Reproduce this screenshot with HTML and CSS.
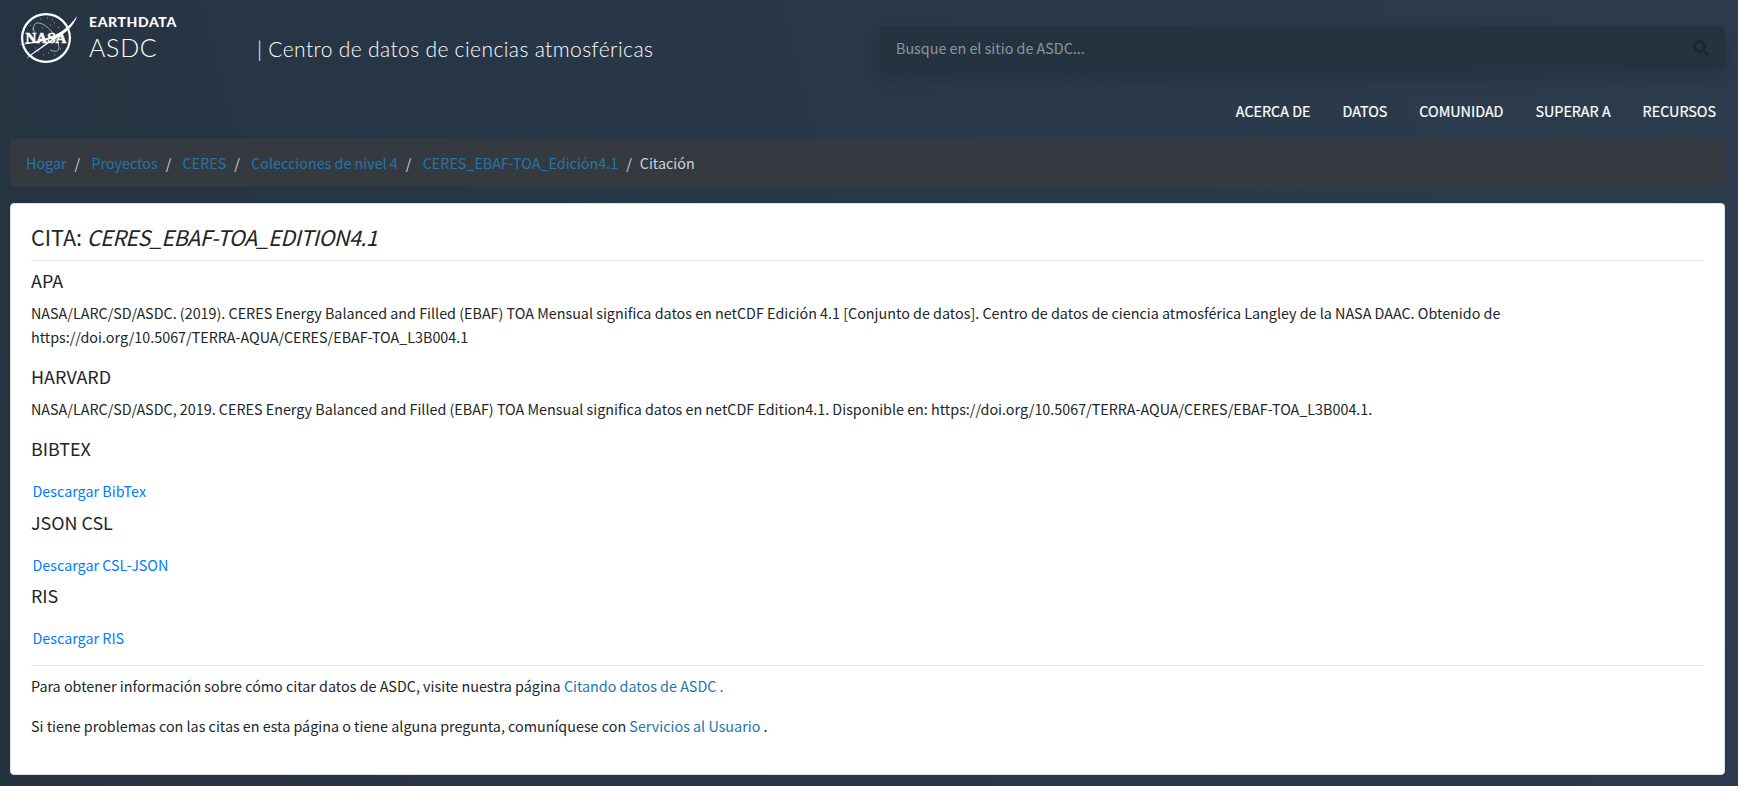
FILE: index.html
```html
<!DOCTYPE html>
<html lang="es">
<head>
<meta charset="utf-8">
<title>ASDC | Citación</title>
<link rel="stylesheet" href="styles.css">
</head>
<body>
<header class="header">
  <div class="brand">
    <svg class="logo" viewBox="0 0 60 54" width="60" height="54">
      <circle cx="28" cy="27" r="23.900" fill="none" stroke="#fff" stroke-width="2.200"/>
      <g fill="none" stroke="#fff">
        <path d="M17 24C14 16 16 11 21 12C30 13 41 28 41 37C40 42 35 40 32 39" stroke-width=".8" opacity=".75"/>
        <path d="M12 14l1 1M22 8h1M34 9h1M40 16l1 1M36 44h1M17 37h1M25 44h1M14 18h1M30 42h1M42 38h1M24 17h1M32 14h1M36 12h1M29 7h1M20 40h1" stroke-width="1" opacity=".55"/>
      </g>
      <path d="M1 34C18 30 34 27 44 20C50 16 55 11 59 5C57 13 50 20 42 25C32 31 18 41 8 48C15 41 27 33 36 27C24 31 12 33 1 34Z" fill="#fff"/>
      <text class="logo-text" x="7.500" y="32" textLength="41" lengthAdjust="spacingAndGlyphs">NASA</text>
    </svg>
    <div class="brand-names">
      <span class="brand-top">EARTHDATA</span>
      <span class="brand-sub">ASDC</span>
    </div>
    <span class="tagline">| Centro de datos de ciencias atmosféricas</span>
  </div>
  <div class="header-right">
    <div class="search">
      <span>Busque en el sitio de ASDC...</span>
      <svg width="16" height="16" viewBox="0 0 512 512"><path fill="#212529" d="M505 442.700L405.300 343c-4.500-4.500-10.600-7-17-7H372c27.600-35.300 44-79.700 44-128C416 93.100 322.900 0 208 0S0 93.100 0 208s93.100 208 208 208c48.300 0 92.700-16.400 128-44v16.300c0 6.400 2.500 12.500 7 17l99.700 99.700c9.400 9.400 24.600 9.400 33.900 0l28.300-28.300c9.400-9.400 9.400-24.600.1-34zM208 336c-70.700 0-128-57.200-128-128 0-70.700 57.200-128 128-128 70.700 0 128 57.200 128 128 0 70.700-57.200 128-128 128z"/></svg>
    </div>
    <nav class="nav"><a>ACERCA DE</a><a>DATOS</a><a>COMUNIDAD</a><a>SUPERAR A</a><a>RECURSOS</a></nav>
  </div>
</header>
<ol class="breadcrumb">
  <li><a>Hogar</a></li><li><a>Proyectos</a></li><li><a>CERES</a></li><li><a>Colecciones de nivel 4</a></li><li><a>CERES_EBAF-TOA_Edición4.1</a></li><li class="active">Citación</li>
</ol>
<main class="card">
  <h4>CITA: <em>CERES_EBAF-TOA_EDITION4.1</em></h4>
  <hr>
  <h5>APA</h5>
  <p>NASA/LARC/SD/ASDC. (2019). CERES Energy Balanced and Filled (EBAF) TOA Mensual significa datos en netCDF Edición 4.1 [Conjunto de datos]. Centro de datos de ciencia atmosférica Langley de la NASA DAAC. Obtenido de<br>https://doi.org/10.5067/TERRA-AQUA/CERES/EBAF-TOA_L3B004.1</p>
  <h5>HARVARD</h5>
  <p>NASA/LARC/SD/ASDC, 2019. CERES Energy Balanced and Filled (EBAF) TOA Mensual significa datos en netCDF Edition4.1. Disponible en: https://doi.org/10.5067/TERRA-AQUA/CERES/EBAF-TOA_L3B004.1.</p>
  <h5>BIBTEX</h5>
  <a class="download">Descargar BibTex</a>
  <h5>JSON CSL</h5>
  <a class="download">Descargar CSL-JSON</a>
  <h5>RIS</h5>
  <a class="download">Descargar RIS</a>
  <hr class="end">
  <p>Para obtener información sobre cómo citar datos de ASDC, visite nuestra página <a>Citando datos de ASDC .</a></p>
  <p>Si tiene problemas con las citas en esta página o tiene alguna pregunta, comuníquese con <a>Servicios al Usuario</a> .</p>
</main>
</body>
</html>
```
FILE: styles.css
```css
* { box-sizing: border-box; }
body {
  margin: 0;
  height: 100vh;
  overflow: hidden;
  padding: 0 13px 0 10px;
  background: linear-gradient(75deg, #253240 0%, #283848 45%, #2c3c4d 100%);
  color: #212529;
  font-family: "Noto Sans CJK SC", "Noto Sans", sans-serif;
  font-size: 14.335px;
  line-height: 24px;
}
a { color: #2276ac; text-decoration: none; }
.header { display: flex; justify-content: space-between; height: 139px; }
.brand { display: flex; align-items: flex-start; color: #fff; padding-left: 8px; }
.logo { margin-top: 11px; flex: none; }
.logo-text { font: bold 14px "Liberation Serif", serif; fill: #fff; stroke: #fff; stroke-width: .5px; }
.brand-names { display: flex; flex-direction: column; width: 179px; padding: 14px 0 0 11px; white-space: nowrap; }
.brand-top { font: 900 14px/16px Lato, sans-serif; letter-spacing: .6px; }
.brand-sub { font: 300 25px/34px Lato, sans-serif; letter-spacing: .7px; }
.tagline { margin-top: 34px; font: 300 21px/30px Lato, sans-serif; letter-spacing: .43px; word-spacing: -.3px; white-space: nowrap; }
.header-right { width: 845px; padding-top: 26px; }
.search {
  display: flex; justify-content: space-between; align-items: center;
  height: 43px; padding: 0 16px; border-radius: 4px;
  background: #253240; color: #88999e;
  box-shadow: 0 8px 16px rgba(0, 0, 0, .15);
}
.nav { display: flex; justify-content: flex-end; gap: 32px; margin-top: 30px; padding-right: 9px; }
.nav a { color: #fff; -webkit-text-stroke: .2px #fff; }
.breadcrumb {
  display: flex; height: 48px; margin: 0 0 16px; padding: 12px 16px;
  list-style: none; background: #343a40; border-radius: 4px; color: #ced4da;
}
.breadcrumb li + li::before { content: "/"; display: inline-block; padding: 0 11.300px 0 8px; color: #ced4da; }
.breadcrumb li.active::before { padding-right: 8px; }
.card {
  height: 572px; padding: 19px 20px 20px; border: 1px solid #dfdfdf; border-radius: 4px;
  background: #fff;
}
h4, h5 { margin: 0 0 9px; font-weight: 400; }
h4 { font-size: 21.500px; line-height: 28px; }
h4 em { letter-spacing: -.5px; }
h5 { font-size: 17.920px; line-height: 23px; }
p { margin: 0 0 16px; white-space: nowrap; }
hr { height: 1px; margin: 0 0 8px; border: 0; background: #e3e4e5; }
.end { margin: 7px 0 8px; }
.download { display: block; height: 41.500px; padding: 10px 1.500px 0; color: #007bff; }
```
